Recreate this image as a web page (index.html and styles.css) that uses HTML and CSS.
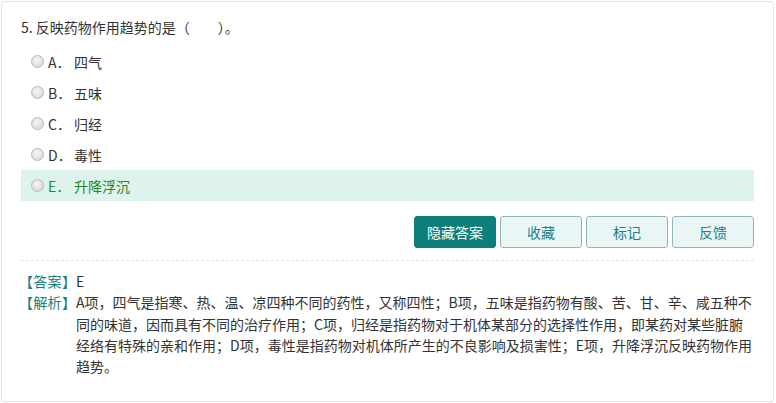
FILE: index.html
```html
<!DOCTYPE html>
<html lang="zh-CN">
<head>
<meta charset="utf-8">
<link rel="stylesheet" href="styles.css">
</head>
<body>
<div class="card">
  <div class="question">5. 反映药物作用趋势的是（　　）。</div>
  <ul class="options">
    <li class="option"><span class="radio"></span><span class="letter">A．</span><span class="text">四气</span></li>
    <li class="option"><span class="radio"></span><span class="letter">B．</span><span class="text">五味</span></li>
    <li class="option"><span class="radio"></span><span class="letter">C．</span><span class="text">归经</span></li>
    <li class="option"><span class="radio"></span><span class="letter">D．</span><span class="text">毒性</span></li>
    <li class="option correct"><span class="radio"></span><span class="letter">E．</span><span class="text">升降浮沉</span></li>
  </ul>
  <div class="actions">
    <button class="btn primary">隐藏答案</button>
    <button class="btn">收藏</button>
    <button class="btn">标记</button>
    <button class="btn">反馈</button>
  </div>
  <div class="analysis">
    <div class="row"><span class="label">【答案】</span><span class="content">E</span></div>
    <div class="row"><span class="label">【解析】</span><span class="content">A项，四气是指寒、热、温、凉四种不同的药性，又称四性；B项，五味是指药物有酸、苦、甘、辛、咸五种不同的味道，因而具有不同的治疗作用；C项，归经是指药物对于机体某部分的选择性作用，即某药对某些脏腑经络有特殊的亲和作用；D项，毒性是指药物对机体所产生的不良影响及损害性；E项，升降浮沉反映药物作用趋势。</span></div>
  </div>
</div>
</body>
</html>
```

FILE: styles.css
```css
html, body {
  margin: 0;
  padding: 0;
  background: #ffffff;
}
body {
  padding: 1px 2px 1px 1px;
  font-family: "Noto Sans CJK SC", "Liberation Sans", sans-serif;
  font-size: 14px;
  color: #333333;
}
.card {
  box-sizing: border-box;
  height: 401px;
  border: 1px solid #e4e4e4;
  border-radius: 3px;
  padding: 15px 19px 0 19px;
}
.question {
  line-height: 21px;
  margin-bottom: 8px;
}
.options {
  list-style: none;
  margin: 0;
  padding: 0;
}
.option {
  display: flex;
  align-items: center;
  height: 31px;
  padding-left: 10px;
}
.option.correct {
  background: #def3ec;
  color: #1f8a1f;
}
.radio {
  width: 11px;
  height: 11px;
  border-radius: 50%;
  border: 1px solid #b9b9b9;
  background: radial-gradient(circle at 45% 40%, #f6f6f6 0, #e2e2e2 55%, #cfcfcf 100%);
  margin-right: 4px;
  box-sizing: content-box;
}
.letter {
  width: 26px;
}
.actions {
  display: flex;
  justify-content: flex-end;
  gap: 4px;
  margin-top: 15px;
  padding-bottom: 12px;
  border-bottom: 1px dashed #e2e2e2;
}
.btn {
  width: 82px;
  height: 32px;
  border: 1px solid #8fb9b9;
  border-radius: 3px;
  background: #eaf6f6;
  color: #23807f;
  font-family: inherit;
  font-size: 14px;
  padding: 0;
}
.btn.primary {
  background: #0d7f7a;
  border-color: #0d7f7a;
  color: #ffffff;
}
.analysis {
  padding-top: 10px;
  line-height: 21.3px;
}
.row {
  display: flex;
}
.label {
  flex: none;
  width: 57px;
  color: #17807f;
  margin-left: -2px;
  letter-spacing: 0.3px;
}
.content {
  flex: 1;
}
```
